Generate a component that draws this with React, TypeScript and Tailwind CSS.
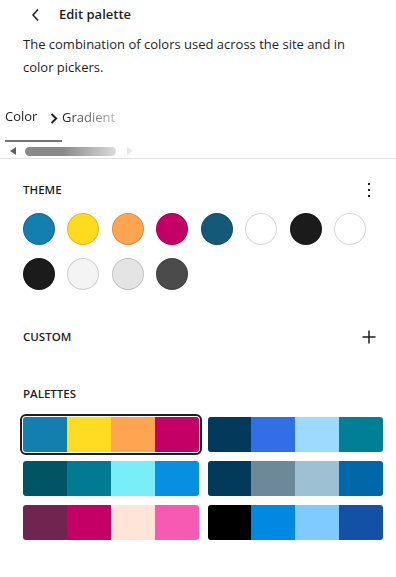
const theme = [
  '#137fae',
  '#ffdb1f',
  '#ffa552',
  '#c40066',
  '#145a78',
  '#ffffff',
  '#1b1b1b',
  '#ffffff',
  '#1b1b1b',
  '#f4f4f4',
  '#e4e4e4',
  '#4b4b4b',
];

const palettes = [
  ['#137fae', '#ffdb22', '#ffa552', '#c40066'],
  ['#033a5b', '#326fe6', '#9ddafd', '#007f96'],
  ['#015463', '#007b93', '#78eef9', '#0790e1'],
  ['#013a5a', '#6c8899', '#9dc0d2', '#0068a8'],
  ['#702450', '#c40066', '#ffe5d8', '#f75ab3'],
  ['#000000', '#0089e3', '#7fcbfd', '#1351a6'],
];

const App = () => {
  return (
    <div className="w-[396px] h-[577px] bg-white text-[#1e1e1e] font-['Open_Sans',sans-serif] overflow-hidden">
      <div className="flex items-center h-[29px]">
        <svg viewBox="0 0 24 24" className="w-6 h-6 ml-[24px] fill-[#1e1e1e]">
          <path d="M14.6 7l-1.2-1L8 12l5.4 6 1.2-1-4.6-5z" />
        </svg>
        <h2 className="ml-[11px] text-[13px] font-semibold">Edit palette</h2>
      </div>

      <p className="px-[23px] mt-[4px] text-[13px] leading-[23px]">
        The combination of colors used across the site and in color pickers.
      </p>

      <div className="mt-[15px] w-[140px] [mask-image:linear-gradient(to_right,black_45%,transparent_100%)]">
        <div className="flex h-[48px] items-stretch text-[13px]">
          <div className="ml-[5px] w-[57px] flex items-center border-b-2 border-[#757575]">
            Color
          </div>
          <div className="flex items-center -ml-[12px]">
            <svg viewBox="0 0 8 11" className="w-[8px] h-[11px] mr-[4px]">
              <polyline
                points="1.5,1 6.2,5.5 1.5,10"
                fill="none"
                stroke="#1e1e1e"
                strokeWidth="1.9"
              />
            </svg>
            <span>Gradient</span>
          </div>
        </div>
        <div className="flex items-center h-[14px] mt-[2px]">
          <div className="ml-[10px] w-0 h-0 border-y-[4px] border-y-transparent border-r-[6px] border-r-[#606060]" />
          <div className="ml-[9px] w-[91px] h-[9px] rounded-full bg-[#8a8a8a]" />
          <div className="ml-[11px] w-0 h-0 border-y-[4px] border-y-transparent border-l-[6px] border-l-[#606060]" />
        </div>
      </div>

      <div className="h-px bg-[#e0e0e0]" />

      <section className="px-[23px] pt-[19px]">
        <div className="flex items-center justify-between h-[24px]">
          <h3 className="text-[11.5px] font-semibold uppercase">Theme</h3>
          <svg viewBox="0 0 24 24" className="w-6 h-6 -mr-[8px] fill-[#1e1e1e]">
            <path d="M13 19h-2v-2h2v2zm0-6h-2v-2h2v2zm0-6h-2V5h2v2z" />
          </svg>
        </div>

        <div className="mt-[11px] flex flex-wrap gap-x-[12.45px] gap-y-[13px]">
          {theme.map((c, i) => (
            <div
              key={i}
              className="w-8 h-8 rounded-full border border-black/15"
              style={{ backgroundColor: c }}
            />
          ))}
        </div>

        <div className="mt-[35px] flex items-center justify-between h-[24px]">
          <h3 className="text-[11.5px] font-semibold uppercase">Custom</h3>
          <svg viewBox="0 0 14 14" className="w-[14px] h-[14px] -mr-[3px]">
            <path d="M7 0.5V13.5M0.5 7H13.5" stroke="#1e1e1e" strokeWidth="1.5" />
          </svg>
        </div>

        <div className="mt-[33px] flex items-center h-[24px]">
          <h3 className="text-[11.5px] font-semibold uppercase">Palettes</h3>
        </div>

        <div className="mt-[11px] w-[360px] grid grid-cols-2 gap-x-[9px] gap-y-[9px]">
          {palettes.map((p, i) => (
            <div
              key={i}
              className={
                i === 0
                  ? 'h-[35px] flex rounded-[3px] overflow-hidden outline-2 outline-offset-1 outline-[#1e1e1e]'
                  : 'h-[35px] flex rounded-[3px] overflow-hidden'
              }
            >
              {p.map((c, j) => (
                <div key={j} className="flex-1" style={{ backgroundColor: c }} />
              ))}
            </div>
          ))}
        </div>
      </section>
    </div>
  );
};

export default App;
